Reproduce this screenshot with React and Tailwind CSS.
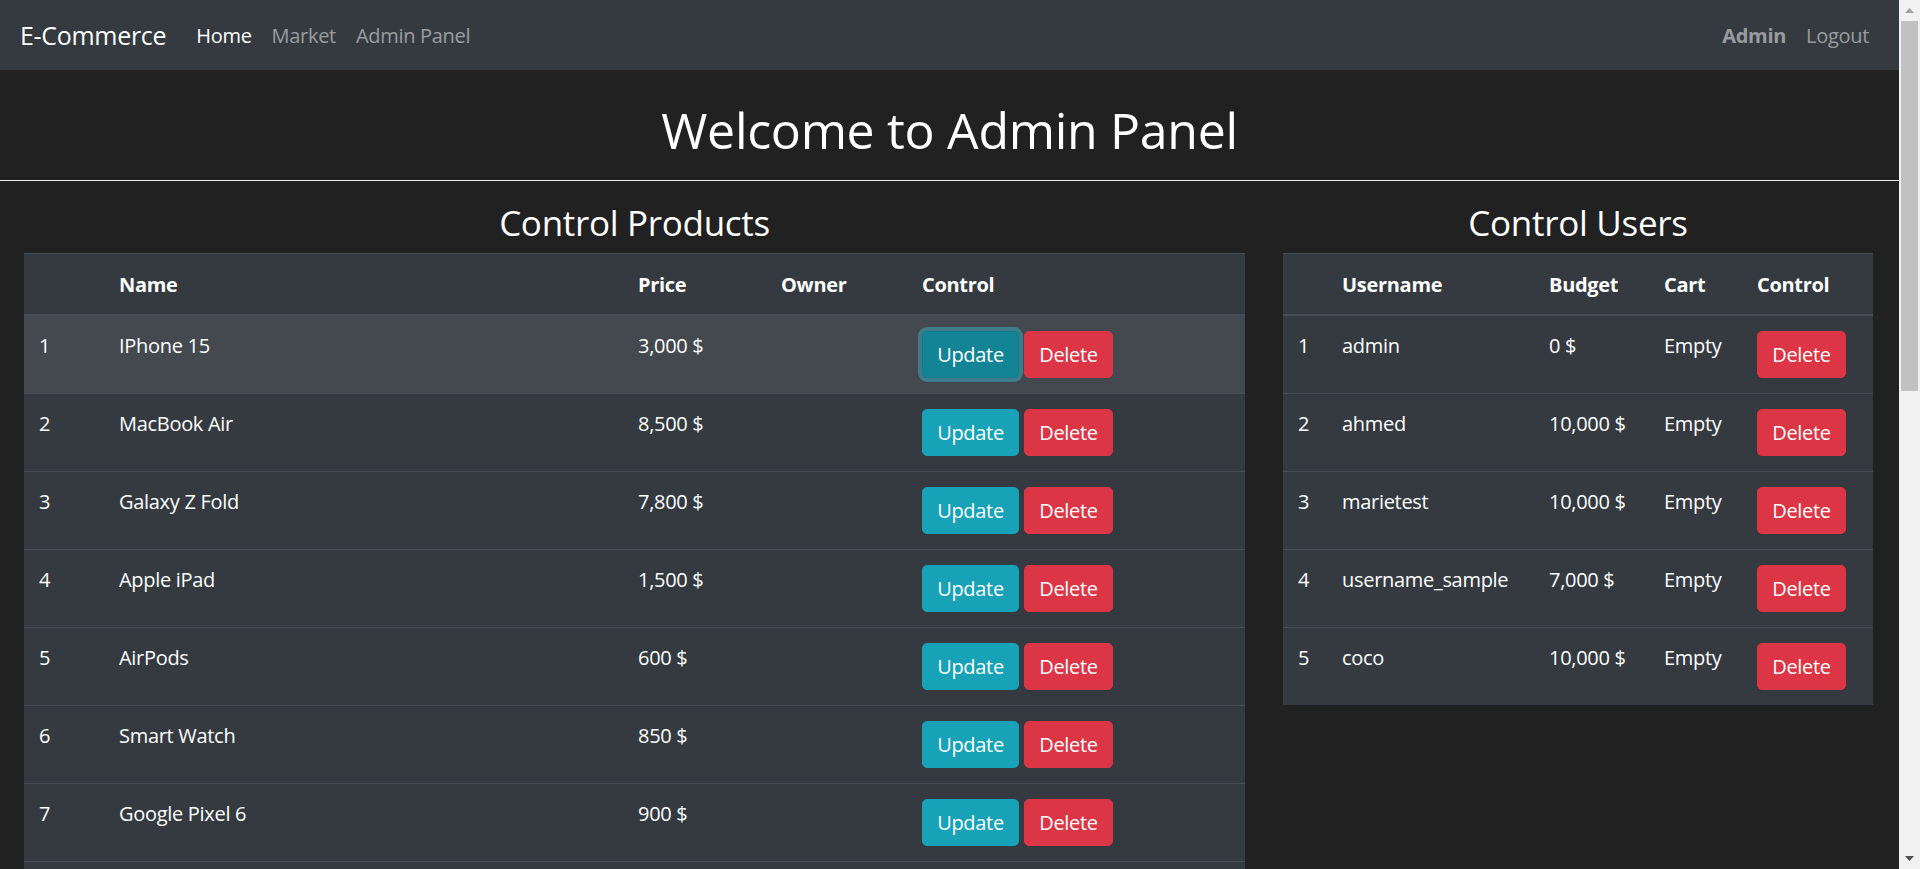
import { useState } from 'react'

const products = [
  { id: 1, name: 'IPhone 15', price: '3,000 $', owner: '' },
  { id: 2, name: 'MacBook Air', price: '8,500 $', owner: '' },
  { id: 3, name: 'Galaxy Z Fold', price: '7,800 $', owner: '' },
  { id: 4, name: 'Apple iPad', price: '1,500 $', owner: '' },
  { id: 5, name: 'AirPods', price: '600 $', owner: '' },
  { id: 6, name: 'Smart Watch', price: '850 $', owner: '' },
  { id: 7, name: 'Google Pixel 6', price: '900 $', owner: '' },
  { id: 8, name: '', price: '', owner: '' },
]

const users = [
  { id: 1, username: 'admin', budget: '0 $', cart: 'Empty' },
  { id: 2, username: 'ahmed', budget: '10,000 $', cart: 'Empty' },
  { id: 3, username: 'marietest', budget: '10,000 $', cart: 'Empty' },
  { id: 4, username: 'username_sample', budget: '7,000 $', cart: 'Empty' },
  { id: 5, username: 'coco', budget: '10,000 $', cart: 'Empty' },
]

const thCls = 'text-left font-bold px-[15px] pt-[16px] pb-[14px] leading-[30px] border-t border-b-2 border-[#454d55]'
const tdCls = 'px-[15px] py-[15px] leading-[30px] align-top border-t border-[#454d55]'

function UpdateBtn({ focused }) {
  return (
    <button
      type="button"
      className={
        focused
          ? 'flex items-center justify-center w-[97px] h-[47px] rounded-[5px] border border-[#117a8b] bg-[#138496] text-white text-[20px] leading-[30px] ring-4 ring-[#3ab0c3]/50'
          : 'flex items-center justify-center w-[97px] h-[47px] rounded-[5px] border border-[#17a2b8] bg-[#17a2b8] text-white text-[20px] leading-[30px]'
      }
    >
      Update
    </button>
  )
}

function DeleteBtn() {
  return (
    <button
      type="button"
      className="flex items-center justify-center w-[89px] h-[47px] rounded-[5px] border border-[#dc3545] bg-[#dc3545] text-white text-[20px] leading-[30px]"
    >
      Delete
    </button>
  )
}

// window scrollbar as it shows in the screenshot
function ScrollBar() {
  return (
    <div className="w-[21px] shrink-0 h-full bg-[#f1f1f1] flex flex-col">
      <div className="h-[21px] flex items-center justify-center">
        <svg width="9" height="5" viewBox="0 0 9 5">
          <polygon points="0,5 4.5,0 9,5" fill="#a3a3a3" />
        </svg>
      </div>
      <div className="h-[370px] mx-[2px] bg-[#c1c1c1]" />
      <div className="flex-1" />
      <div className="h-[21px] flex items-center justify-center">
        <svg width="9" height="5" viewBox="0 0 9 5">
          <polygon points="0,0 9,0 4.5,5" fill="#505050" />
        </svg>
      </div>
    </div>
  )
}

export default function App() {
  const [hovered] = useState(1)

  return (
    <div className="h-screen flex overflow-hidden bg-[#212121] text-white font-['Open_Sans','Liberation_Sans',sans-serif] text-[20px] leading-[30px] tracking-[-0.015em]">
      <main className="flex-1 min-w-0 overflow-hidden">
        {/* navbar */}
        <nav className="h-[70px] bg-[#343a40] flex items-center px-[20px] pt-[1px]">
          <a className="text-[25px] leading-[37.5px] py-[6px] mr-[20px] text-white">E-Commerce</a>
          <ul className="flex items-center">
            <li><a className="block px-[10px] py-[10px] text-white">Home</a></li>
            <li><a className="block px-[10px] py-[10px] text-white/50">Market</a></li>
            <li><a className="block px-[10px] py-[10px] text-white/50">Admin Panel</a></li>
          </ul>
          <ul className="flex items-center ml-auto">
            <li><a className="block px-[10px] py-[10px] text-white/50 font-bold">Admin</a></li>
            <li><a className="block px-[10px] py-[10px] text-white/50">Logout</a></li>
          </ul>
        </nav>

        <h1 className="pt-[30px] text-center text-[50px] leading-[60px] font-medium">Welcome to Admin Panel</h1>
        <hr className="mt-[20px] border-0 border-t border-[#e9ecef]" />

        <div className="flex pl-[24px] pr-[26px] gap-[38px]">
          {/* products */}
          <section className="w-[1221px] shrink-0">
            <h3 className="mt-[21px] mb-[9px] text-center text-[35px] leading-[42px] font-medium">Control Products</h3>
            <table className="w-full table-fixed bg-[#343a40]">
              <colgroup>
                <col className="w-[80px]" />
                <col className="w-[519px]" />
                <col className="w-[143px]" />
                <col className="w-[141px]" />
                <col />
              </colgroup>
              <thead>
                <tr>
                  <th className={thCls}></th>
                  <th className={thCls}>Name</th>
                  <th className={thCls}>Price</th>
                  <th className={thCls}>Owner</th>
                  <th className={thCls}>Control</th>
                </tr>
              </thead>
              <tbody>
                {products.map((p) => (
                  <tr key={p.id} className={p.id === hovered ? 'bg-[#43494e]' : ''}>
                    <td className={tdCls}>{p.name ? p.id : ''}</td>
                    <td className={tdCls}>{p.name}</td>
                    <td className={tdCls}>{p.price}</td>
                    <td className={tdCls}>{p.owner}</td>
                    <td className={tdCls}>
                      <div className="flex gap-[5px] h-[47px]">
                        {p.name && <UpdateBtn focused={p.id === 1} />}
                        {p.name && <DeleteBtn />}
                      </div>
                    </td>
                  </tr>
                ))}
              </tbody>
            </table>
          </section>

          {/* users */}
          <section className="flex-1 min-w-0">
            <h3 className="mt-[21px] mb-[9px] text-center text-[35px] leading-[42px] font-medium">Control Users</h3>
            <table className="w-full table-fixed bg-[#343a40]">
              <colgroup>
                <col className="w-[44px]" />
                <col className="w-[207px]" />
                <col className="w-[115px]" />
                <col className="w-[93px]" />
                <col />
              </colgroup>
              <thead>
                <tr>
                  <th className={thCls}></th>
                  <th className={thCls}>Username</th>
                  <th className={thCls}>Budget</th>
                  <th className={thCls}>Cart</th>
                  <th className={thCls}>Control</th>
                </tr>
              </thead>
              <tbody>
                {users.map((u) => (
                  <tr key={u.id}>
                    <td className={tdCls}>{u.id}</td>
                    <td className={tdCls}>{u.username}</td>
                    <td className={tdCls}>{u.budget}</td>
                    <td className={tdCls}>{u.cart}</td>
                    <td className={tdCls}>
                      <DeleteBtn />
                    </td>
                  </tr>
                ))}
              </tbody>
            </table>
          </section>
        </div>
      </main>
      <ScrollBar />
    </div>
  )
}
